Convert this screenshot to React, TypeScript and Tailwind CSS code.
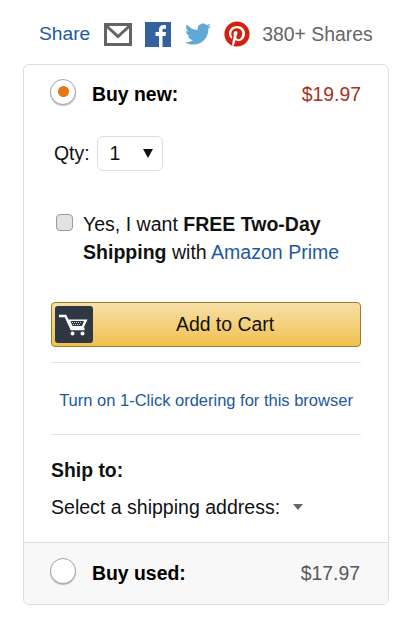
import { FaTwitter, FaPinterest } from "react-icons/fa";

function Radio({ on }: { on?: boolean }) {
  return (
    <span className="w-[26px] h-[26px] rounded-full border border-[#a6a6a6] bg-white shadow-[0_1px_1px_rgba(0,0,0,0.25)] flex items-center justify-center shrink-0">
      {on && <span className="w-[11px] h-[11px] rounded-full bg-[#e47911]" />}
    </span>
  );
}

function Cart() {
  return (
    <svg width="32" height="28" viewBox="0 0 32 28">
      <path d="M1 5h6.500l6 13h13" fill="none" stroke="#fff" strokeWidth="2.400" />
      <path d="M9.500 8.500h20l-4 8.500H13z" fill="#fff" />
      <path d="M12.500 10h13.500l-2 5H14.500z" fill="#2f3842" />
      <path d="M14 11.500h10M15 13.500h8" stroke="#cfd2d6" strokeWidth="1" strokeDasharray="1 1" />
      <circle cx="14.500" cy="22.500" r="2" fill="#fff" />
      <circle cx="24.500" cy="22.500" r="2" fill="#fff" />
    </svg>
  );
}

export default function App() {
  return (
    <div className="w-[413px] h-[618px] bg-white font-['Liberation_Sans',Arial,sans-serif] text-[#111] text-[19.4px]">
      <div className="h-[64px] pl-[39px] flex items-center pt-[4px]">
        <span className="text-[#21599f] pt-[1px] text-[19.2px]">Share</span>
        <svg width="28" height="23" viewBox="0 0 28 23" className="ml-[14px]">
          <rect x="1.500" y="1.500" width="25" height="20" fill="none" stroke="#646464" strokeWidth="3" />
          <path d="M2 2.500l12 11 12-11" fill="none" stroke="#646464" strokeWidth="3" />
        </svg>
        <svg width="26" height="25" viewBox="0 0 26 25" className="ml-[13px]">
          <rect width="26" height="25" fill="#33629f" />
          <path d="M14 25V14h-3.500v-4H14V7.500C14 4.500 15.800 3 18.400 3c1.200 0 2.200.1 2.600.2v3.500h-1.800c-1.400 0-1.700.7-1.700 1.600V10h3.500l-.5 4h-3v11z" fill="#fff" />
        </svg>
        <FaTwitter className="ml-[14px] text-[#5fa9d3]" size={26} />
        <FaPinterest className="ml-[13px] text-[#d3210f]" size={26} />
        <span className="ml-[12px] pt-[1px] text-[#666]">380+ Shares</span>
      </div>

      <div className="mx-[23px] w-[366px] h-[541px] border border-[#ddd] rounded-[6px] flex flex-col">
        <div className="px-[27px] flex-1">
          <div className="flex items-center h-[55px] pb-[2px]">
            <span className="-ml-px"><Radio on /></span>
            <span className="ml-[16px] mt-[6px] font-bold leading-none text-black">Buy new:</span>
            <span className="ml-auto mt-[6px] text-[#a5321c] leading-none">$19.97</span>
          </div>

          <div className="flex items-center mt-[16px] pl-[3px]">
            <span>Qty:</span>
            <span className="ml-[7px] w-[66px] h-[35px] border border-[#ddd] rounded-[6px] flex items-center justify-between pl-[12px] pr-[9px]">
              1
              <span className="w-0 h-0 border-x-[5px] border-x-transparent border-t-[9px] border-t-[#111]" />
            </span>
          </div>

          <div className="flex mt-[39px] pl-[5px] leading-[28px] text-[19.55px]">
            <span className="mt-[4px] w-[17px] h-[17px] rounded-[4px] border border-[#9a9a9a] bg-[#e2e2e2] shrink-0" />
            <p className="ml-[10px]">
              Yes, I want <b>FREE Two-Day Shipping</b> with <span className="text-[#21599f]">Amazon Prime</span>
            </p>
          </div>

          <button className="mt-[36px] w-full h-[45px] flex items-center border border-[#9c7e31] rounded-[4px] bg-gradient-to-b from-[#f7dfa5] to-[#f0c14b] p-[3px]">
            <span className="w-[38px] h-[37px] rounded-[3px] bg-[#2f3842] flex items-center justify-center">
              <Cart />
            </span>
            <span className="flex-1 text-center">Add to Cart</span>
          </button>

          <div className="mt-[15px] h-[73px] border-y border-[#e5e5e5] flex items-center justify-center pt-[3px] text-[16.5px] text-[#21599f]">
            Turn on 1-Click ordering for this browser
          </div>

          <div className="mt-[22px] font-bold leading-[26px]">Ship to:</div>
          <div className="mt-[11px] flex items-center leading-[26px] text-[19.55px]">
            Select a shipping address:
            <span className="ml-[13px] w-0 h-0 border-x-[5px] border-x-transparent border-t-[6px] border-t-[#666]" />
          </div>
        </div>

        <div className="h-[62px] border-t border-[#ddd] bg-[#f8f8f8] rounded-b-[6px] px-[26px] pb-[6px] flex items-center">
          <Radio />
          <span className="ml-[16px] mt-[6px] font-bold leading-none text-black">Buy used:</span>
          <span className="ml-auto mr-[2px] mt-[6px] leading-none text-[#565959]">$17.97</span>
        </div>
      </div>
    </div>
  );
}
